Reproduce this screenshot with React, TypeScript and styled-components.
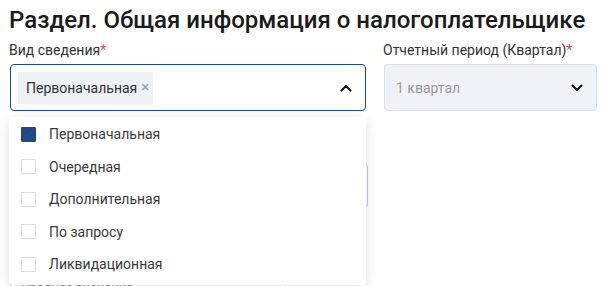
import React from "react";
import styled, { createGlobalStyle } from "styled-components";

const Global = createGlobalStyle`
  html, body { margin: 0; padding: 0; background: #fff; }
  body { font-family: Roboto, "Noto Sans", Arial, sans-serif; color: #333; }
  * { box-sizing: border-box; }
`;

const Page = styled.div`
  padding: 5px 10px 0 10px;
  width: 607px;
  height: 286px;
  overflow: hidden;
`;

const Title = styled.h1`
  margin: 0 0 0 -1px;
  font-size: 24px;
  line-height: 30px;
  font-weight: 500;
  color: #1a1a1a;
  white-space: nowrap;
`;

const Row = styled.div`
  display: grid;
  grid-template-columns: 356px 213px;
  column-gap: 18px;
  margin-top: 7px;
`;

const Field = styled.div`
  position: relative;
  display: flex;
  flex-direction: column;
`;

const Label = styled.label`
  font-size: 14px;
  line-height: 16px;
  color: #333;
  margin-bottom: 6px;
  margin-left: -1px;
`;

const Star = styled.span`
  color: #e5484d;
`;

const SelectBox = styled.div<{ $active?: boolean; $disabled?: boolean }>`
  height: 47px;
  border-radius: 4px;
  border: 1px solid ${(p) => (p.$active ? "#1d4b8f" : "#dde1ea")};
  background: ${(p) => (p.$disabled ? "#eff2f7" : "#fff")};
  display: flex;
  align-items: center;
  padding: 0 13px 0 7px;
  gap: 8px;
`;

const Tag = styled.span`
  display: inline-flex;
  align-items: center;
  height: 32px;
  padding: 0 4px 0 8px;
  background: #eef1f6;
  border-radius: 2px;
  font-size: 14px;
  color: #333;
  gap: 4px;
`;

const TagClose = styled.span`
  color: #a0a0a0;
  font-size: 15px;
  line-height: 1;
`;

const Placeholder = styled.span`
  font-size: 14px;
  color: #9a9a9a;
  padding-left: 4px;
`;

const Spacer = styled.span`
  flex: 1;
`;

const Chevron = ({ up }: { up?: boolean }) => (
  <svg width="12" height="8" viewBox="0 0 12 8">
    <path
      d={up ? "M1.5 6.5 L6 2 L10.5 6.5" : "M1.5 1.5 L6 6 L10.5 1.5"}
      fill="none"
      stroke="#111"
      strokeWidth="2"
      strokeLinecap="round"
      strokeLinejoin="round"
    />
  </svg>
);

const Menu = styled.ul`
  position: absolute;
  top: calc(100% + 6px);
  left: -1px;
  width: 357px;
  margin: 0;
  padding: 1px 0 4px 0;
  list-style: none;
  background: #fff;
  border-radius: 4px;
  box-shadow: 0 3px 14px rgba(0, 0, 0, 0.12);
  z-index: 10;
`;

const Item = styled.li`
  height: 32.5px;
  display: flex;
  align-items: center;
  padding-left: 12px;
  gap: 13px;
  font-size: 14px;
  color: #3a3a3a;
`;

const Box = styled.span<{ $checked?: boolean }>`
  width: 15px;
  height: 15px;
  border-radius: 1px;
  border: 1px solid ${(p) => (p.$checked ? "#1f4b85" : "#dcdcdc")};
  background: ${(p) => (p.$checked ? "#1f4b85" : "#fff")};
  display: inline-flex;
  align-items: center;
  justify-content: center;
`;

const Behind = styled.div`
  display: grid;
  grid-template-columns: 358px;
  row-gap: 70px;
  margin-top: 52px;
`;

const GhostInput = styled.div`
  height: 45px;
  border: 1px solid #c9c6e4;
  border-radius: 4px;
`;

const GhostTable = styled.div`
  width: 276px;
  height: 30px;
  border-left: 1px solid #c9c9c9;
  border-right: 1px solid #c9c9c9;
  padding: 2px 0 0 10px;
  font-size: 13px;
  color: #888;
`;

const options = [
  "Первоначальная",
  "Очередная",
  "Дополнительная",
  "По запросу",
  "Ликвидационная",
];

export default function App() {
  return (
    <>
      <Global />
      <Page>
        <Title>Раздел. Общая информация о налогоплательщике</Title>
        <Row>
          <Field>
            <Label>
              Вид сведения<Star>*</Star>
            </Label>
            <SelectBox $active>
              <Tag>
                Первоначальная<TagClose>×</TagClose>
              </Tag>
              <Spacer />
              <Chevron up />
            </SelectBox>
            <Menu>
              {options.map((o, i) => (
                <Item key={o}>
                  <Box $checked={i === 0}>
                    {i === 0 && (
                      <svg width="11" height="9" viewBox="0 0 11 9">
                        <path
                          d="M1.5 4.5 L4.2 7 L9.5 1.5"
                          fill="none"
                          stroke="#2a4f7c"
                          strokeWidth="1.6"
                        />
                      </svg>
                    )}
                  </Box>
                  {o}
                </Item>
              ))}
            </Menu>
          </Field>
          <Field>
            <Label>
              Отчетный период (Квартал)<Star>*</Star>
            </Label>
            <SelectBox $disabled>
              <Placeholder>1 квартал</Placeholder>
              <Spacer />
              <Chevron />
            </SelectBox>
          </Field>
        </Row>
        <Behind>
          <GhostInput />
          <GhostTable>Среднее значение</GhostTable>
        </Behind>
      </Page>
    </>
  );
}
